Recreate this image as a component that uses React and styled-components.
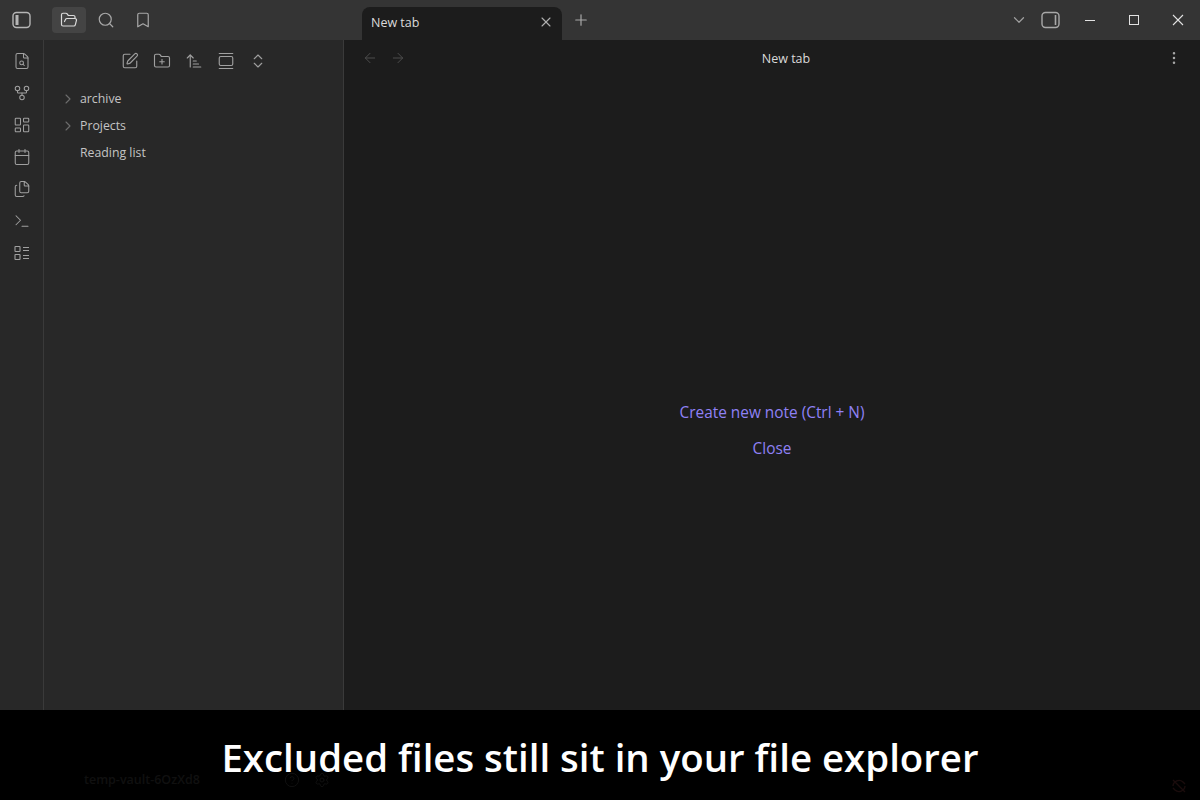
import React from 'react';
import styled, { createGlobalStyle } from 'styled-components';
import {
  ArrowLeft,
  ArrowRight,
  ArrowUpNarrowWide,
  Bookmark,
  Calendar,
  ChevronDown,
  ChevronRight,
  ChevronsUpDown,
  CircleHelp,
  FileSearch,
  Files,
  FolderOpen,
  FolderPlus,
  GalleryVertical,
  GitFork,
  LayoutDashboard,
  MoreVertical,
  Plus,
  Search,
  Settings,
  SquarePen,
  Terminal,
  X,
} from 'lucide-react';

const GlobalStyle = createGlobalStyle`
  html, body {
    margin: 0;
    padding: 0;
    height: 100%;
    background: #1c1c1c;
  }
  #root {
    height: 100%;
  }
`;

const SidebarToggle = ({ side }) => (
  <svg width="20" height="18" viewBox="0 0 20 18" fill="none" stroke="currentColor">
    <rect x="1" y="1.5" width="17" height="15" rx="3.5" strokeWidth="1.4" />
    {side === 'left' ? (
      <rect x="3.5" y="4" width="3" height="10" fill="currentColor" stroke="none" />
    ) : (
      <line x1="14.5" y1="4" x2="14.5" y2="14" strokeWidth="1.6" />
    )}
  </svg>
);

const MinimizeGlyph = () => (
  <svg width="12" height="12" viewBox="0 0 12 12" stroke="currentColor" fill="none">
    <line x1="1" y1="6.5" x2="11" y2="6.5" strokeWidth="1" />
  </svg>
);

const MaximizeGlyph = () => (
  <svg width="12" height="12" viewBox="0 0 12 12" stroke="currentColor" fill="none">
    <rect x="1.5" y="1.5" width="9" height="9" strokeWidth="1" />
  </svg>
);

const CloseGlyph = () => (
  <svg width="12" height="12" viewBox="0 0 12 12" stroke="currentColor" fill="none">
    <path d="M1 1 L11 11 M11 1 L1 11" strokeWidth="1.1" />
  </svg>
);

const TasksIcon = () => (
  <svg width="18" height="18" viewBox="0 0 18 18" fill="none" stroke="currentColor" strokeWidth="1.1">
    <rect x="2" y="2.5" width="5" height="5" rx="0.5" />
    <rect x="2" y="10.5" width="5" height="5" rx="0.5" />
    <path d="M10 3.5h6M10 6.5h6M10 11.5h6M10 14.5h6" />
  </svg>
);

const SyncOffIcon = () => (
  <svg width="18" height="18" viewBox="0 0 18 18" fill="none" stroke="currentColor" strokeWidth="1.4">
    <path d="M3 9a6 6 0 0 1 10-4l2 2M15 9a6 6 0 0 1-10 4l-2-2M3 3l12 12" />
  </svg>
);

const ribbonItems = [FileSearch, GitFork, LayoutDashboard, Calendar, Files, Terminal, TasksIcon];
const navActions = [SquarePen, FolderPlus, ArrowUpNarrowWide, GalleryVertical, ChevronsUpDown];
const treeItems = [
  { name: 'archive', folder: true },
  { name: 'Projects', folder: true },
  { name: 'Reading list', folder: false },
];

export default function App() {
  return (
    <>
      <GlobalStyle />
      <Frame>
        <TitleBar>
          <LeftTools>
            <ToolSlot $tone="#b5b5b5">
              <SidebarToggle side="left" />
            </ToolSlot>
            <ToolGroup>
              <ActiveTool>
                <FolderOpen size={18} strokeWidth={1.6} />
              </ActiveTool>
              <ViewTool $tone="#a8a8a8">
                <Search size={18} strokeWidth={1.6} />
              </ViewTool>
              <ViewTool $tone="#a8a8a8">
                <Bookmark size={18} strokeWidth={1.6} />
              </ViewTool>
            </ToolGroup>
          </LeftTools>
          <TabStrip>
            <Tab>
              <TabLabel>New tab</TabLabel>
              <X size={16} strokeWidth={1.6} color="#b0b0b0" />
            </Tab>
            <NewTab>
              <Plus size={18} strokeWidth={1.6} />
            </NewTab>
          </TabStrip>
          <RightTools>
            <TabListCaret>
              <ChevronDown size={18} strokeWidth={1.6} />
            </TabListCaret>
            <RightToggle $tone="#a8a8a8">
              <SidebarToggle side="right" />
            </RightToggle>
            <WindowButton>
              <MinimizeGlyph />
            </WindowButton>
            <WindowButton>
              <MaximizeGlyph />
            </WindowButton>
            <WindowButton>
              <CloseGlyph />
            </WindowButton>
          </RightTools>
        </TitleBar>

        <Workspace>
          <Ribbon>
            {ribbonItems.map((Icon, i) => (
              <RibbonButton key={i}>
                <Icon size={18} strokeWidth={1.4} />
              </RibbonButton>
            ))}
          </Ribbon>

          <Sidebar>
            <NavHeader>
              {navActions.map((Icon, i) => (
                <NavButton key={i}>
                  <Icon size={18} strokeWidth={1.5} />
                </NavButton>
              ))}
            </NavHeader>
            <Tree>
              {treeItems.map((item) => (
                <TreeRow key={item.name}>
                  <Caret>
                    {item.folder && <ChevronRight size={16} strokeWidth={1.6} />}
                  </Caret>
                  {item.name}
                </TreeRow>
              ))}
            </Tree>
          </Sidebar>

          <Main>
            <ViewHeader>
              <NavArrows>
                <ArrowLeft size={16} strokeWidth={1.5} />
                <ArrowRight size={16} strokeWidth={1.5} />
              </NavArrows>
              <ViewTitle>New tab</ViewTitle>
              <MoreButton>
                <MoreVertical size={16} strokeWidth={1.8} />
              </MoreButton>
            </ViewHeader>
            <EmptyState>
              <EmptyAction>Create new note (Ctrl + N)</EmptyAction>
              <EmptyAction>Close</EmptyAction>
            </EmptyState>
          </Main>
        </Workspace>

        <Caption>
          <HiddenStatus>
            <VaultName>temp-vault-6OzXd8</VaultName>
            <CircleHelp size={16} strokeWidth={1.5} />
            <Settings size={16} strokeWidth={1.5} />
          </HiddenStatus>
          <SyncBadge>
            <SyncOffIcon />
          </SyncBadge>
          <CaptionText>Excluded files still sit in your file explorer</CaptionText>
        </Caption>
      </Frame>
    </>
  );
}

const Frame = styled.div`
  position: relative;
  display: flex;
  flex-direction: column;
  width: 1200px;
  height: 800px;
  overflow: hidden;
  background: #1c1c1c;
  font-family: 'Open Sans', 'Noto Sans', sans-serif;
`;

const TitleBar = styled.div`
  display: flex;
  flex: 0 0 40px;
  align-items: stretch;
  height: 40px;
  background: #343434;
`;

const LeftTools = styled.div`
  display: flex;
  flex: 0 0 362px;
  align-items: center;
  padding-left: 8px;
  box-sizing: border-box;
`;

const ToolGroup = styled.div`
  display: flex;
  align-items: center;
  gap: 3px;
  margin-left: 16px;
`;

const ToolSlot = styled.div`
  display: flex;
  align-items: center;
  justify-content: center;
  width: 28px;
  height: 26px;
  color: ${(p) => p.$tone};
`;

const ViewTool = styled(ToolSlot)`
  width: 34px;
`;

const ActiveTool = styled(ToolSlot)`
  width: 34px;
  border-radius: 4px;
  background: #444444;
  color: #dadada;
`;

const RightToggle = styled(ToolSlot)`
  margin-right: 3px;
`;

const TabStrip = styled.div`
  display: flex;
  flex: 1;
  align-items: flex-end;
`;

const Tab = styled.div`
  display: flex;
  align-items: center;
  justify-content: space-between;
  width: 200px;
  height: 33px;
  padding: 0 8px 3px 9px;
  box-sizing: border-box;
  border-radius: 8px 8px 0 0;
  background: #1c1c1c;
`;

const TabLabel = styled.span`
  color: #dadada;
  font-size: 12.5px;
`;

const NewTab = styled.div`
  display: flex;
  align-items: center;
  justify-content: center;
  width: 38px;
  height: 40px;
  color: #a8a8a8;
`;

const RightTools = styled.div`
  display: flex;
  align-items: center;
`;

const TabListCaret = styled.div`
  display: flex;
  margin-right: 9px;
  color: #a0a0a0;
`;

const WindowButton = styled.div`
  display: flex;
  align-items: center;
  justify-content: center;
  width: 44px;
  height: 40px;
  color: #e2e2e2;
`;

const Workspace = styled.div`
  display: flex;
  flex: 1;
  min-height: 0;
`;

const Ribbon = styled.div`
  display: flex;
  flex: 0 0 44px;
  flex-direction: column;
  align-items: center;
  gap: 4px;
  padding-top: 7px;
  box-sizing: border-box;
  border-right: 1px solid #3a3a3a;
  background: #282828;
`;

const RibbonButton = styled.div`
  display: flex;
  align-items: center;
  justify-content: center;
  width: 28px;
  height: 28px;
  color: #a0a0a0;
`;

const Sidebar = styled.div`
  display: flex;
  flex: 0 0 300px;
  flex-direction: column;
  box-sizing: border-box;
  border-right: 1px solid #3a3a3a;
  background: #282828;
`;

const NavHeader = styled.div`
  display: flex;
  justify-content: center;
  gap: 4px;
  padding: 7px 0 0;
`;

const NavButton = styled.div`
  display: flex;
  align-items: center;
  justify-content: center;
  width: 28px;
  height: 28px;
  color: #a0a0a0;
`;

const Tree = styled.div`
  display: flex;
  flex-direction: column;
  padding-top: 10px;
`;

const TreeRow = styled.div`
  display: flex;
  align-items: center;
  height: 27px;
  padding-left: 16px;
  color: #c4c4c4;
  font-size: 12.3px;
`;

const Caret = styled.span`
  display: flex;
  align-items: center;
  width: 20px;
  color: #6e6e6e;
`;

const Main = styled.div`
  display: flex;
  flex: 1;
  flex-direction: column;
  min-width: 0;
  background: #1c1c1c;
`;

const ViewHeader = styled.div`
  display: flex;
  align-items: center;
  justify-content: space-between;
  height: 36px;
  padding: 0 18px;
`;

const NavArrows = styled.div`
  display: flex;
  gap: 12px;
  color: #4c4c4c;
`;

const ViewTitle = styled.span`
  color: #dadada;
  font-size: 12.5px;
`;

const MoreButton = styled.div`
  display: flex;
  color: #a8a8a8;
`;

const EmptyState = styled.div`
  display: flex;
  flex: 1;
  flex-direction: column;
  align-items: center;
  gap: 14px;
  padding-top: 326px;
  box-sizing: border-box;
`;

const EmptyAction = styled.div`
  color: #8f81f5;
  font-size: 15.4px;
  line-height: 22px;
`;

const Caption = styled.div`
  position: absolute;
  left: 0;
  right: 0;
  bottom: 0;
  display: flex;
  align-items: center;
  justify-content: center;
  height: 90px;
  background: #000;
`;

const CaptionText = styled.div`
  position: relative;
  color: #fff;
  font-size: 38.4px;
  font-weight: 600;
  line-height: 1;
  padding-top: 4px;
`;

const HiddenStatus = styled.div`
  position: absolute;
  left: 84px;
  top: 61px;
  display: flex;
  align-items: center;
  gap: 14px;
  color: #101010;
`;

const VaultName = styled.span`
  margin-right: 70px;
  font-size: 12.5px;
  font-weight: 600;
`;

const SyncBadge = styled.div`
  position: absolute;
  right: 12px;
  top: 67px;
  display: flex;
  color: #1a0c0c;
`;
